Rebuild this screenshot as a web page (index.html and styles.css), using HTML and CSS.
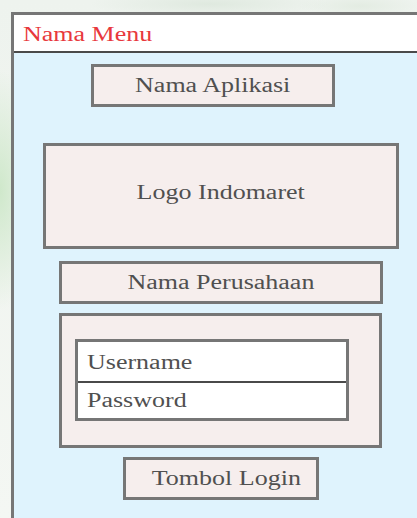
FILE: index.html
```html
<!DOCTYPE html>
<html lang="id">
<head>
<meta charset="utf-8">
<title>Login</title>
<link rel="stylesheet" href="styles.css">
</head>
<body>
<div class="frame">
  <header class="menu-bar"><span class="wide">Nama Menu</span></header>
  <main class="screen">
    <div class="block app-name"><span class="wide">Nama Aplikasi</span></div>
    <div class="block logo"><span class="wide">Logo Indomaret</span></div>
    <div class="block company"><span class="wide">Nama Perusahaan</span></div>
    <div class="block login-box">
      <div class="fields">
        <div class="field"><span class="wide">Username</span></div>
        <div class="field"><span class="wide">Password</span></div>
      </div>
    </div>
    <div class="block login-btn"><span class="wide">Tombol Login</span></div>
  </main>
</div>
</body>
</html>
```

FILE: styles.css
```css
html, body {
  margin: 0;
  height: 100%;
  overflow: hidden;
}

body {
  padding: 12px 0 0 11px;
  box-sizing: border-box;
  font-family: "Liberation Serif", "Times New Roman", serif;
  font-size: 20px;
  color: #505050;
  background:
    radial-gradient(ellipse 40px 120px at 0 190px, #cfe8cb 0%, rgba(207,232,203,0) 100%),
    radial-gradient(ellipse 120px 14px at 210px 4px, #dfe9df 0%, rgba(223,233,223,0) 100%),
    radial-gradient(ellipse 60px 12px at 360px 6px, #e3ece2 0%, rgba(227,236,226,0) 100%),
    linear-gradient(180deg, #eef3ee 0%, #f4f7f3 100%);
}

/* wide-set lettering used across the mockup */
.wide {
  display: inline-block;
  transform: scaleX(1.3);
  white-space: nowrap;
}

/* the window runs on past the right and bottom edges, so only top/left borders show */
.frame {
  width: 406px;
  height: 506px;
  box-sizing: border-box;
  border-top: 3px solid #767676;
  border-left: 3px solid #767676;
  display: flex;
  flex-direction: column;
  overflow: hidden;
}

.menu-bar {
  flex: none;
  height: 38px;
  background: #ffffff;
  border-bottom: 2px solid #4a4a4a;
  color: #e8383c;
  display: flex;
  align-items: center;
  padding: 2px 0 0 9px;
  box-sizing: border-box;
}

.menu-bar .wide {
  transform-origin: left center;
}

.screen {
  flex: 1;
  background: #dff3fd;
  display: flex;
  flex-direction: column;
  align-items: flex-start;
}

.block {
  flex: none;
  box-sizing: border-box;
  border: 3px solid #767676;
  background: #f6eeed;
  display: flex;
  align-items: center;
  justify-content: center;
}

.app-name {
  margin: 11px 0 0 77px;
  width: 244px;
  height: 43px;
}

.logo {
  margin: 36px 0 0 29px;
  width: 356px;
  height: 106px;
  padding-bottom: 8px;
}

.company {
  margin: 12px 0 0 45px;
  width: 324px;
  height: 43px;
}

.login-box {
  margin: 9px 0 0 45px;
  width: 323px;
  height: 135px;
  align-items: flex-start;
  justify-content: flex-start;
  padding: 23px 0 0 13px;
}

.fields {
  width: 274px;
  height: 82px;
  box-sizing: border-box;
  border: 3px solid #767676;
  background: #ffffff;
  display: flex;
  flex-direction: column;
}

.field {
  flex: 1;
  display: flex;
  align-items: center;
  padding: 3px 0 0 9px;
}

.field + .field {
  border-top: 2px solid #4a4a4a;
  padding-top: 0;
}

.field .wide {
  transform-origin: left center;
}

.login-btn {
  margin: 9px 0 0 109px;
  width: 196px;
  height: 43px;
  padding-left: 10px;
}
```
